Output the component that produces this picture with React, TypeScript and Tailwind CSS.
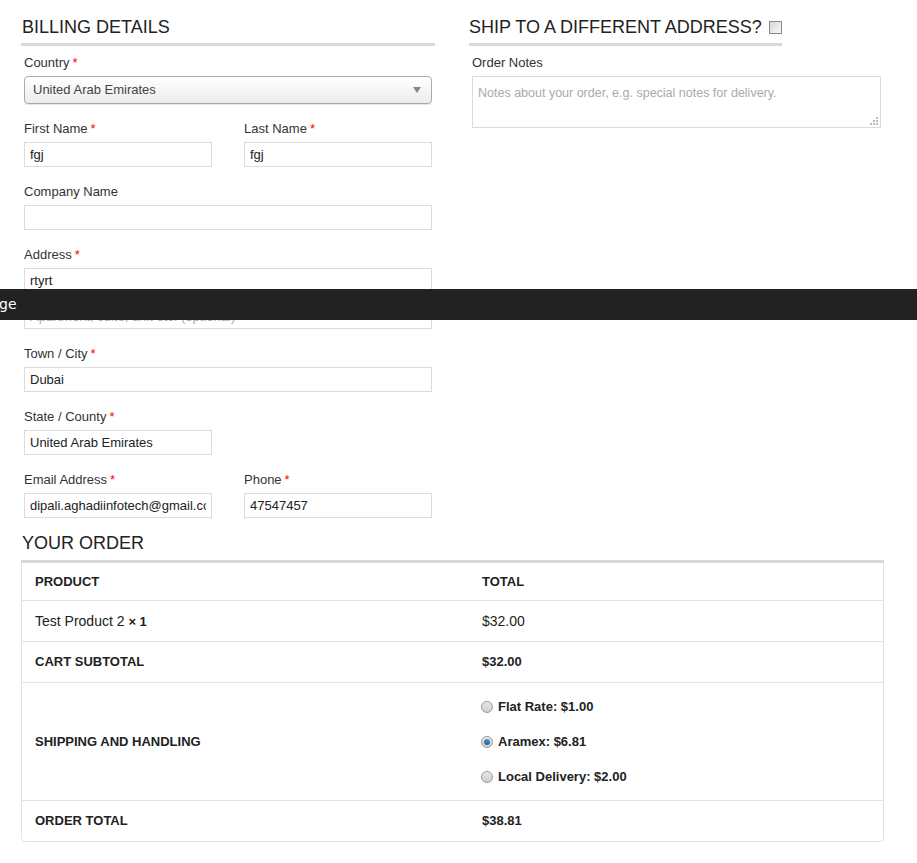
import React from "react";

const font = { fontFamily: '"Liberation Sans", Arial, sans-serif' };

function Req() {
  return <span className="text-[#ff0000] ml-[3px]">*</span>;
}

function Field({
  label,
  required,
  value,
  half,
  children,
}: {
  label: string;
  required?: boolean;
  value?: string;
  half?: boolean;
  children?: React.ReactNode;
}) {
  return (
    <div className={half ? "w-[191px]" : "w-full"}>
      <div className="h-5 leading-5 text-[13px] text-[#333] pl-[3px]">
        {label}
        {required && <Req />}
      </div>
      <div className="mt-[3px] pl-[3px]">
        {children ?? (
          <input
            readOnly
            defaultValue={value}
            className="block w-full h-[25px] border border-[#dcdcdc] bg-white px-[5px] text-[13px] text-[#222] outline-none"
            style={font}
          />
        )}
      </div>
    </div>
  );
}

function Radio({ checked, label }: { checked?: boolean; label: string }) {
  return (
    <div className="flex items-center h-5">
      <span className="w-[12px] h-[12px] rounded-full border border-[#9a9a9a] bg-gradient-to-b from-[#e8e8e8] to-[#cfcfcf] flex items-center justify-center">
        {checked && (
          <span className="w-[6px] h-[6px] rounded-full bg-gradient-to-b from-[#4a9ad8] to-[#1c5d9c]" />
        )}
      </span>
      <span className="ml-[5px] text-[13px] font-bold text-[#222]">{label}</span>
    </div>
  );
}

export default function App() {
  return (
    <div className="relative min-h-[863px] bg-white pl-[21px]" style={font}>
      <div className="flex gap-[34px]">
        {/* Billing */}
        <div className="w-[414px]">
          <h3 className="mt-[15px] h-[24px] leading-[24px] text-[18px] text-[#222] uppercase pl-[1px]">
            Billing Details
          </h3>
          <div className="mt-[4px] h-[3px] bg-[#d8d8d8]" />
          <div className="mt-[7px] w-[411px] flex flex-col gap-[15px]">
            <Field label="Country" required>
              <div className="relative h-[28px] rounded-[4px] border border-[#aaa] bg-gradient-to-b from-white to-[#ececec] shadow-[0_1px_1px_rgba(0,0,0,0.1)] flex items-center pl-[8px] text-[13px] text-[#444]">
                United Arab Emirates
                <span className="absolute right-[10px] top-[10px] w-0 h-0 border-l-[4px] border-r-[4px] border-t-[6px] border-l-transparent border-r-transparent border-t-[#888]" />
              </div>
            </Field>
            <div className="flex justify-between">
              <Field label="First Name" required value="fgj" half />
              <Field label="Last Name" required value="fgj" half />
            </div>
            <Field label="Company Name" value="" />
            <div>
              <Field label="Address" required value="rtyrt" />
              <div className="mt-[11px] pl-[3px]">
                <input
                  readOnly
                  placeholder="Apartment, suite, unit etc. (optional)"
                  className="block w-full h-[25px] border border-[#dcdcdc] bg-white px-[5px] text-[13px] text-[#222] placeholder:text-[#aaa] outline-none"
                  style={font}
                />
              </div>
            </div>
            <Field label="Town / City" required value="Dubai" />
            <Field label="State / County" required value="United Arab Emirates" half />
            <div className="flex justify-between">
              <Field label="Email Address" required value="dipali.aghadiinfotech@gmail.com" half />
              <Field label="Phone" required value="47547457" half />
            </div>
          </div>
        </div>

        {/* Shipping */}
        <div className="w-[415px]">
          <div className="inline-block">
            <h3 className="mt-[15px] h-[24px] leading-[24px] text-[18px] text-[#222] uppercase flex items-center">
              Ship to a different address?
              <span className="ml-[7px] w-[13px] h-[13px] border border-[#888] bg-gradient-to-br from-[#d8d8d8] to-[#f7f7f7]" />
            </h3>
            <div className="mt-[4px] h-[3px] bg-[#d8d8d8]" />
          </div>
          <div className="mt-[7px] pl-[3px]">
            <div className="h-5 leading-5 text-[13px] text-[#333]">Order Notes</div>
            <div className="relative mt-[3px] w-[409px] h-[52px] border border-[#dcdcdc] px-[5px] pt-[7px] text-[12.5px] text-[#aaa]">
              Notes about your order, e.g. special notes for delivery.
              <svg className="absolute right-[1px] bottom-[1px]" width="10" height="10" viewBox="0 0 10 10">
                <rect x="7" y="1" width="2" height="2" fill="#bbb" />
                <rect x="4" y="4" width="2" height="2" fill="#bbb" />
                <rect x="7" y="4" width="2" height="2" fill="#bbb" />
                <rect x="1" y="7" width="2" height="2" fill="#bbb" />
                <rect x="4" y="7" width="2" height="2" fill="#bbb" />
                <rect x="7" y="7" width="2" height="2" fill="#bbb" />
              </svg>
            </div>
          </div>
        </div>
      </div>

      {/* Your order */}
      <div className="w-[863px] mt-[13px]">
        <h3 className="h-[24px] leading-[24px] text-[18px] text-[#222] uppercase pl-[1px]">Your Order</h3>
        <div className="mt-[5px] h-[3px] bg-[#d8d8d8]" />
        <div className="border border-[#e2e2e2] border-t-0 rounded-b-[5px] text-[#222]">
          <div className="grid grid-cols-[447px_1fr] h-[37px] items-center text-[13px] font-bold">
            <div className="pl-[13px]">PRODUCT</div>
            <div className="pl-[13px]">TOTAL</div>
          </div>
          <div className="grid grid-cols-[447px_1fr] h-[41px] items-center border-t border-[#e2e2e2] text-[14px]">
            <div className="pl-[13px]">
              Test Product 2 <span className="font-bold text-[13px]">× 1</span>
            </div>
            <div className="pl-[13px]">$32.00</div>
          </div>
          <div className="grid grid-cols-[447px_1fr] h-[41px] items-center border-t border-[#e2e2e2] text-[13px] font-bold">
            <div className="pl-[13px]">CART SUBTOTAL</div>
            <div className="pl-[13px]">$32.00</div>
          </div>
          <div className="grid grid-cols-[447px_1fr] h-[118px] items-center border-t border-[#e2e2e2]">
            <div className="pl-[13px] text-[13px] font-bold">SHIPPING AND HANDLING</div>
            <div className="pl-[12px] flex flex-col gap-[15px]">
              <Radio label="Flat Rate: $1.00" />
              <Radio checked label="Aramex: $6.81" />
              <Radio label="Local Delivery: $2.00" />
            </div>
          </div>
          <div className="grid grid-cols-[447px_1fr] h-[41px] items-center border-t border-[#e2e2e2] text-[13px] font-bold">
            <div className="pl-[13px]">ORDER TOTAL</div>
            <div className="pl-[13px]">$38.81</div>
          </div>
        </div>
      </div>

      {/* Dark overlay bar */}
      <div className="absolute left-0 right-0 top-[289px] h-[31px] bg-[#222] flex items-center text-white text-[14px]" style={{ fontFamily: '"DejaVu Sans", sans-serif' }}>
        <span className="-ml-[1px]">ge</span>
      </div>
    </div>
  );
}
